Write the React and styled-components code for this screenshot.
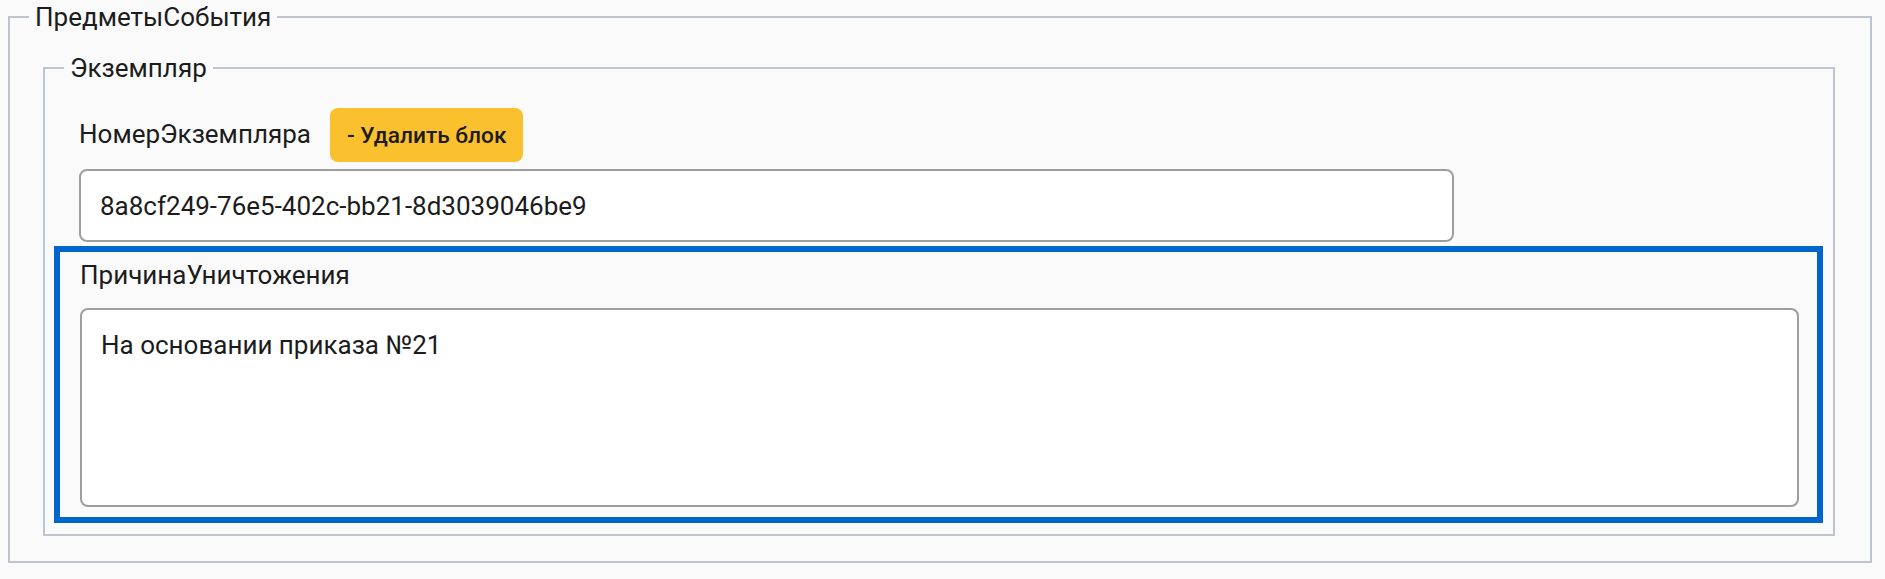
import React from "react";
import styled, { createGlobalStyle } from "styled-components";

const Global = createGlobalStyle`
  html, body { margin: 0; padding: 0; background: #fafafa; }
  body { font-family: Roboto, "Noto Sans", "Liberation Sans", sans-serif; color: #1c1c1c; }
  * { box-sizing: border-box; }
`;

const Page = styled.div`
  padding: 0 13px 14px 8px;
`;

const Group = styled.fieldset`
  margin: 0;
  min-width: 0;
  border: 2px solid #bfc4ce;
  padding: 17px 35px 25px 19px;
`;

const InnerGroup = styled.fieldset`
  margin: 0 0 0 14px;
  min-width: 0;
  border: 2px solid #bfc4ce;
  padding: 0 10px 11px 9px;
`;

const Legend = styled.legend`
  font-size: 26px;
  line-height: 34px;
  padding: 0 6px;
  margin-left: ${(p) => p.$offset || 0}px;
  color: #1c1c1c;
`;

const FieldRow = styled.div`
  display: flex;
  align-items: center;
  gap: 19px;
  padding-left: 25px;
  margin-top: 23px;
`;

const Label = styled.span`
  font-size: 26px;
  line-height: 30px;
  margin-bottom: 3px;
  color: #1c1c1c;
`;

const DeleteButton = styled.button`
  height: 54px;
  padding: 0 17px;
  border: none;
  border-radius: 8px;
  background: #fbc02d;
  color: #1c1c1c;
  font-family: Roboto, "Noto Sans", sans-serif;
  font-size: 22.7px;
  font-weight: 500;
  cursor: pointer;
`;

const TextInput = styled.input`
  display: block;
  width: 1375px;
  height: 73px;
  margin: 7px 0 4px 25px;
  padding: 0 19px;
  border: 2px solid #9e9e9e;
  border-radius: 8px;
  background: #fff;
  font-family: Roboto, "Noto Sans", sans-serif;
  font-size: 26px;
  color: #1c1c1c;
  outline: none;
`;

const Highlight = styled.div`
  border: 6px solid #0066cc;
  padding: 0 18px 10px 20px;
`;

const HighlightLabel = styled.div`
  font-size: 26px;
  line-height: 30px;
  padding: 8px 0 18px;
  color: #1c1c1c;
`;

const TextArea = styled.textarea`
  display: block;
  width: 100%;
  height: 199px;
  padding: 20px 19px 15px;
  border: 2px solid #9e9e9e;
  border-radius: 8px;
  background: #fff;
  font-family: Roboto, "Noto Sans", sans-serif;
  font-size: 26px;
  line-height: 30px;
  color: #1c1c1c;
  resize: none;
  outline: none;
`;

export default function App() {
  return (
    <>
      <Global />
      <Page>
        <Group>
          <Legend>ПредметыСобытия</Legend>
          <InnerGroup>
            <Legend $offset={10}>Экземпляр</Legend>
            <FieldRow>
              <Label>НомерЭкземпляра</Label>
              <DeleteButton type="button">- Удалить блок</DeleteButton>
            </FieldRow>
            <TextInput readOnly value="8a8cf249-76e5-402c-bb21-8d3039046be9" />
            <Highlight>
              <HighlightLabel>ПричинаУничтожения</HighlightLabel>
              <TextArea readOnly value="На основании приказа №21" />
            </Highlight>
          </InnerGroup>
        </Group>
      </Page>
    </>
  );
}
